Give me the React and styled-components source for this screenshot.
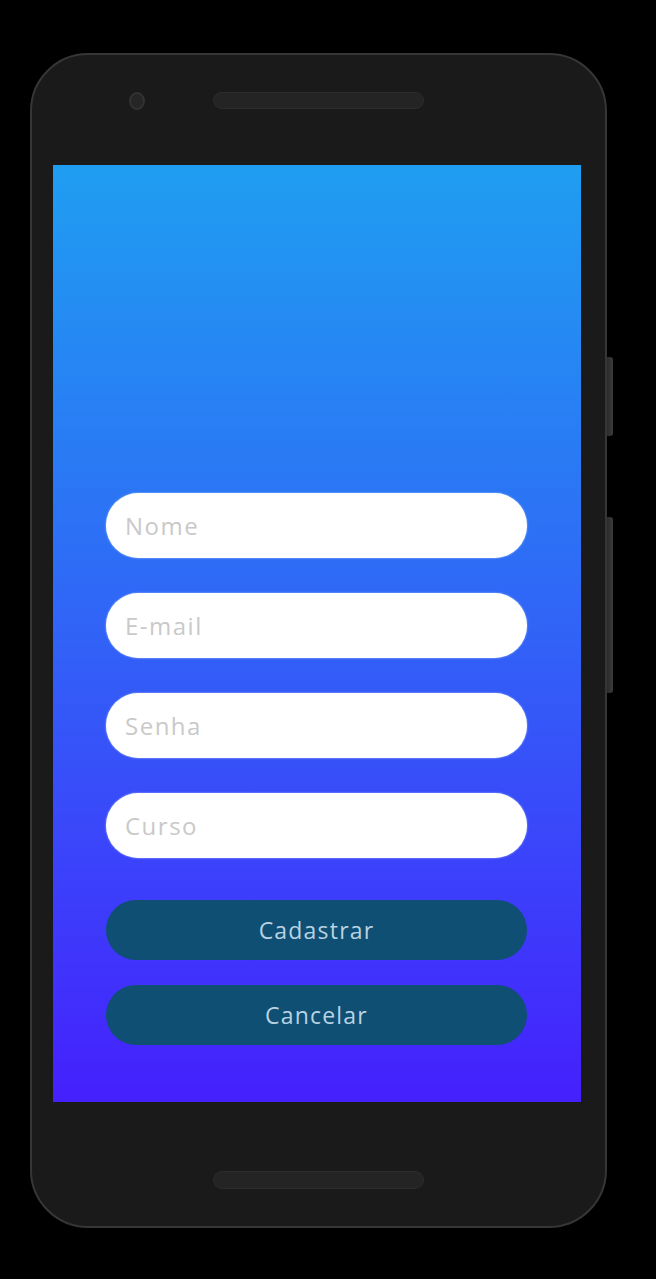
import React from 'react'
import styled, { createGlobalStyle } from 'styled-components'

const GlobalStyle = createGlobalStyle`
    html, body {
        margin: 0;
        padding: 0;
        background: #000;
    }
    body {
        font-family: "Open Sans", "Liberation Sans", sans-serif;
    }
`

const Page = styled.div`
    width: 656px;
    height: 1279px;
    background: #000;
    padding-top: 53px;
    padding-left: 30px;
    box-sizing: border-box;
    overflow: hidden;
`

const Phone = styled.div`
    position: relative;
    width: 577px;
    height: 1175px;
    box-sizing: border-box;
    background: #1a1a1a;
    border: 2px solid #363636;
    border-radius: 58px;
    display: flex;
    flex-direction: column;
    align-items: stretch;
    padding: 0 24px 0 21px;
`

const SideKey = styled.div`
    position: absolute;
    right: -8px;
    top: ${p => p.top}px;
    width: 6px;
    height: ${p => p.h}px;
    background: linear-gradient(to right, #2a2a2a, #3c3c3c);
    border-radius: 0 3px 3px 0;
`

const TopBar = styled.div`
    height: 110px;
    display: flex;
    align-items: center;
    justify-content: center;
    position: relative;
    padding-bottom: 20px;
    box-sizing: border-box;
`

const Camera = styled.div`
    position: absolute;
    left: 76px;
    top: 37px;
    width: 12px;
    height: 14px;
    border-radius: 50%;
    background: #262626;
    border: 2px solid #333;
`

const Speaker = styled.div`
    width: 211px;
    height: 17px;
    border-radius: 9px;
    background: #242424;
    border: 1px solid #2c2c2c;
    box-sizing: border-box;
    margin-left: 3px;
`

const Screen = styled.div`
    height: 937px;
    background: linear-gradient(to bottom, #1f9ef1 0%, #2c72f5 38%, #3a46fa 72%, #4520fd 100%);
    display: flex;
    flex-direction: column;
    justify-content: flex-end;
    padding: 0 54px 57px 53px;
    box-sizing: border-box;
`

const Form = styled.form`
    display: flex;
    flex-direction: column;
`

const Field = styled.input`
    height: 65px;
    border: none;
    border-radius: 33px;
    background: #fff;
    margin-bottom: 35px;
    padding: 0 19px;
    font-family: "Open Sans", "Liberation Sans", sans-serif;
    font-size: 24px;
    letter-spacing: 1.5px;
    color: #444;
    outline: none;
    box-shadow: 0 0 2px rgba(200, 220, 255, 0.9);

    &::placeholder {
        color: #c9c9c9;
    }

    &:last-of-type {
        margin-bottom: 42px;
    }
`

const Button = styled.button`
    height: 60px;
    border: none;
    border-radius: 30px;
    background: #0e4f73;
    color: #b9d2e2;
    font-family: "Open Sans", "Liberation Sans", sans-serif;
    font-size: 23px;
    letter-spacing: 1.2px;
    margin-top: ${p => p.gap || 0}px;
    cursor: pointer;
`

const BottomBar = styled.div`
    flex: 1;
    display: flex;
    justify-content: center;
    padding-top: 69px;
    box-sizing: border-box;
`

const BottomSpeaker = styled(Speaker)`
    height: 18px;
`

export default function App() {
    return (
        <Page>
            <GlobalStyle />
            <Phone>
                <SideKey top={302} h={79} />
                <SideKey top={462} h={176} />
                <TopBar>
                    <Camera />
                    <Speaker />
                </TopBar>
                <Screen>
                    <Form onSubmit={e => e.preventDefault()}>
                        <Field placeholder="Nome" />
                        <Field placeholder="E-mail" />
                        <Field placeholder="Senha" type="password" />
                        <Field placeholder="Curso" />
                        <Button type="submit">Cadastrar</Button>
                        <Button type="button" gap={25}>Cancelar</Button>
                    </Form>
                </Screen>
                <BottomBar>
                    <BottomSpeaker />
                </BottomBar>
            </Phone>
        </Page>
    )
}
